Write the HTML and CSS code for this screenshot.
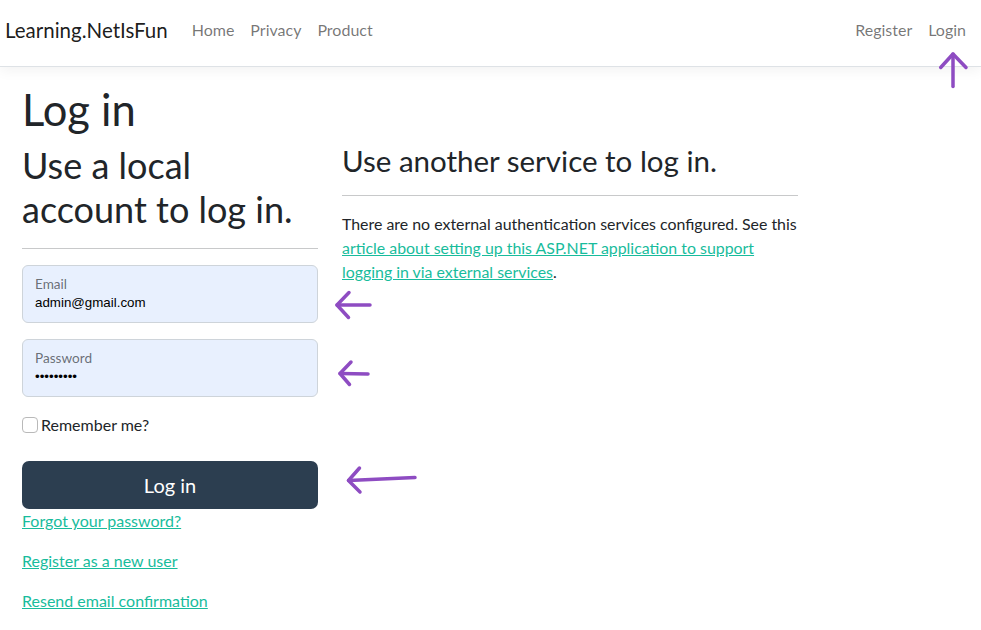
FILE: index.html
```html
<!DOCTYPE html>
<html lang="en">
<head>
<meta charset="utf-8">
<title>Log in - Learning.NetIsFun</title>
<link rel="stylesheet" href="styles.css">
</head>
<body>
<header class="navbar">
  <a class="brand" href="#">Learning.NetIsFun</a>
  <nav class="nav-main">
    <a class="nav-link" href="#">Home</a>
    <a class="nav-link" href="#">Privacy</a>
    <a class="nav-link" href="#">Product</a>
  </nav>
  <nav class="nav-user">
    <a class="nav-link" href="#">Register</a>
    <a class="nav-link" href="#">Login</a>
  </nav>
</header>
<main class="main">
  <h1 class="title">Log in</h1>
  <div class="row">
    <section class="col-left">
      <h2 class="subtitle">Use a local account to log in.</h2>
      <hr class="rule rule-left">
      <div class="field">
        <span class="field-label">Email</span>
        <span class="field-value">admin@gmail.com</span>
      </div>
      <div class="field">
        <span class="field-label">Password</span>
        <span class="field-value">•••••••••</span>
      </div>
      <label class="check">
        <span class="check-box"></span>
        <span>Remember me?</span>
      </label>
      <button class="btn-login" type="button">Log in</button>
      <p class="link-line"><a href="#">Forgot your password?</a></p>
      <p class="link-line"><a href="#">Register as a new user</a></p>
      <p class="link-line"><a href="#">Resend email confirmation</a></p>
    </section>
    <section class="col-right">
      <h3 class="subtitle-sm">Use another service to log in.</h3>
      <hr class="rule">
      <p class="text">There are no external authentication services configured. See this <a href="#">article about setting up this ASP.NET application to support logging in via external services</a>.</p>
    </section>
  </div>
</main>
<svg class="annotations" width="981" height="630" viewBox="0 0 981 630" aria-hidden="true">
  <g fill="none" stroke="#8e4cc2" stroke-width="3.5" stroke-linecap="round" stroke-linejoin="round">
    <path d="M953 86.5 L953 54"/>
    <path d="M940.7 67.5 L953 54 L966 67.5"/>
    <path d="M370 305 L337 305"/>
    <path d="M349 292.5 L337 305 L348.5 317.5"/>
    <path d="M368 374 L340 373.5"/>
    <path d="M351 362 L340 373.5 L349.5 384.5"/>
    <path d="M415 477.5 L348.5 480.5"/>
    <path d="M359.5 468 L348.5 480.5 L360 492"/>
  </g>
</svg>
</body>
</html>
```
FILE: styles.css
```css
* { box-sizing: border-box; }
html, body { margin: 0; padding: 0; }
body {
  font-family: Lato, "Noto Sans", sans-serif;
  font-size: 16px;
  line-height: 1.5;
  color: #212529;
  background: #fff;
  position: relative;
  width: 981px;
  height: 630px;
  overflow: hidden;
}
a { color: #18bc9c; }

.navbar {
  display: flex;
  align-items: center;
  height: 67px;
  padding: 0 7px 6px 5px;
  border-bottom: 1px solid #dee2e6;
  box-shadow: 0 4px 12px rgba(0,0,0,.05);
  background: #fff;
}
.brand {
  font-size: 20.5px;
  line-height: 30px;
  color: rgba(0,0,0,.9);
  text-decoration: none;
  margin-right: 16px;
}
.nav-main, .nav-user { display: flex; }
.nav-user { margin-left: auto; }
.nav-link {
  padding: 8px;
  color: rgba(0,0,0,.55);
  text-decoration: none;
  line-height: 24px;
}

.main { padding: 16px 22px 0; }
.title {
  font-size: 43.5px;
  font-weight: 400;
  line-height: 1.2;
  margin: 0 0 8px;
}
.row {
  display: grid;
  grid-template-columns: 296px 456px;
  column-gap: 24px;
  align-items: start;
}
.subtitle {
  font-size: 36px;
  font-weight: 400;
  line-height: 44px;
  margin: 0;
}
.subtitle-sm {
  font-size: 29.5px;
  font-weight: 400;
  line-height: 1.2;
  margin: 0;
}
.rule {
  border: 0;
  border-top: 1px solid #c8c9ca;
  margin: 16px 0;
}
.rule-left { margin-top: 17px; }
.field {
  display: flex;
  flex-direction: column;
  height: 58px;
  padding: 9px 12px 0;
  border: 1px solid #ced4da;
  border-radius: 6px;
  background: #e8f0fe;
  margin-bottom: 16px;
}
.field-label {
  font-size: 13.6px;
  line-height: 18px;
  color: rgba(33,37,41,.65);
}
.field-value {
  font-family: "Liberation Sans", Arial, sans-serif;
  font-size: 13.33px;
  line-height: 20px;
  color: #000;
}
.check {
  display: flex;
  align-items: center;
  gap: 3px;
  line-height: 24px;
  margin-bottom: 24px;
}
.check-box {
  width: 16px;
  height: 16px;
  border: 1px solid #b9b9b9;
  border-radius: 4px;
  background: #fff;
}
.btn-login {
  display: block;
  width: 100%;
  height: 48px;
  border: 0;
  border-radius: 7px;
  background: #2c3e50;
  color: #fff;
  font-family: Lato, "Noto Sans", sans-serif;
  font-size: 20px;
  line-height: 30px;
  padding: 8px 16px;
}
.link-line { margin: 0 0 16px; line-height: 24px; }
.text { margin: 0; line-height: 24px; font-size: 15.9px; }

.annotations {
  position: absolute;
  top: 0;
  left: 0;
  pointer-events: none;
}
```
